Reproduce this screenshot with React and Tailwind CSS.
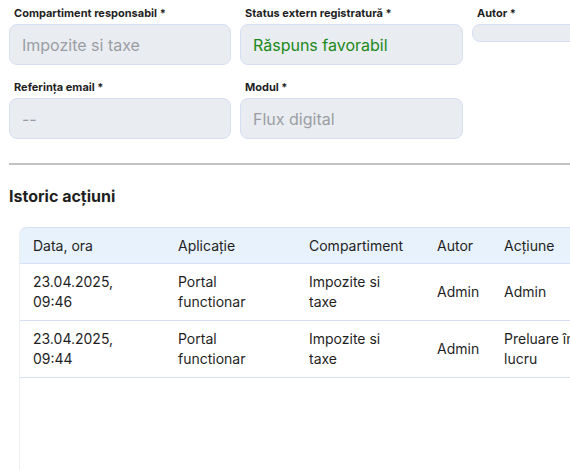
import React from 'react';

const font = { fontFamily: 'Inter, "Noto Sans", sans-serif' };

function Field({ label, value, tone = 'muted', short = false }) {
  return (
    <div className="flex flex-col">
      <label className="text-[11px] font-bold text-[#1f1f1f] leading-[14px] pl-[5px] mb-[4px] whitespace-nowrap">{label}</label>
      <div
        className={`rounded-[8px] border border-[#d6def3] bg-[#e9ecf0] px-3 flex items-center text-[16px] ${
          short ? 'h-[18px]' : 'h-[41px]'
        } ${tone === 'green' ? 'text-[#1a8a1a]' : 'text-[#9a9ea4]'}`}
      >
        {value}
      </div>
    </div>
  );
}

const rows = [
  ['23.04.2025,\n09:46', 'Portal\nfunctionar', 'Impozite si\ntaxe', 'Admin', 'Admin'],
  ['23.04.2025,\n09:44', 'Portal\nfunctionar', 'Impozite si\ntaxe', 'Admin', 'Preluare în\nlucru'],
];

export default function App() {
  return (
    <div style={font} className="w-[570px] h-[470px] overflow-hidden bg-white text-[#1f1f1f]">
      <div className="pl-[9px] pt-[6px]">
        <div className="grid grid-cols-[222px_223px_222px] gap-x-[9px] gap-y-[15px] w-[700px]">
          <Field label="Compartiment responsabil *" value="Impozite si taxe" />
          <Field label="Status extern registratură *" value="Răspuns favorabil" tone="green" />
          <Field label="Autor *" value="" short />
          <Field label="Referința email *" value="--" />
          <Field label="Modul *" value="Flux digital" />
        </div>
        <div className="mt-[24px] h-[2px] bg-[#c2c2c2] w-[600px]" />
        <h2 className="mt-[21px] text-[16px] font-bold leading-[20px]">Istoric acțiuni</h2>
        <div className="ml-[10px] mt-[21px] w-[640px] h-[300px] border-l border-[#eceef2] rounded-tl-[7px]">
          <div className="grid grid-cols-[145px_131px_128px_67px_169px] text-[14px] leading-[20px]">
            <div className="contents">
              {['Data, ora', 'Aplicație', 'Compartiment', 'Autor', 'Acțiune'].map((h, i) => (
                <div
                  key={h}
                  className={`bg-[#e8f2fc] h-[37px] flex items-center pl-[13px] border-t border-b border-[#d6e0f5] ${
                    i === 0 ? 'rounded-tl-[7px]' : ''
                  }`}
                >
                  {h}
                </div>
              ))}
            </div>
            {rows.map((r, ri) => (
              <div key={ri} className="contents">
                {r.map((c, ci) => (
                  <div
                    key={ci}
                    className="h-[57px] flex items-center pl-[13px] border-b border-[#d6e0f5] whitespace-pre-line"
                  >
                    {c}
                  </div>
                ))}
              </div>
            ))}
          </div>
        </div>
      </div>
    </div>
  );
}
